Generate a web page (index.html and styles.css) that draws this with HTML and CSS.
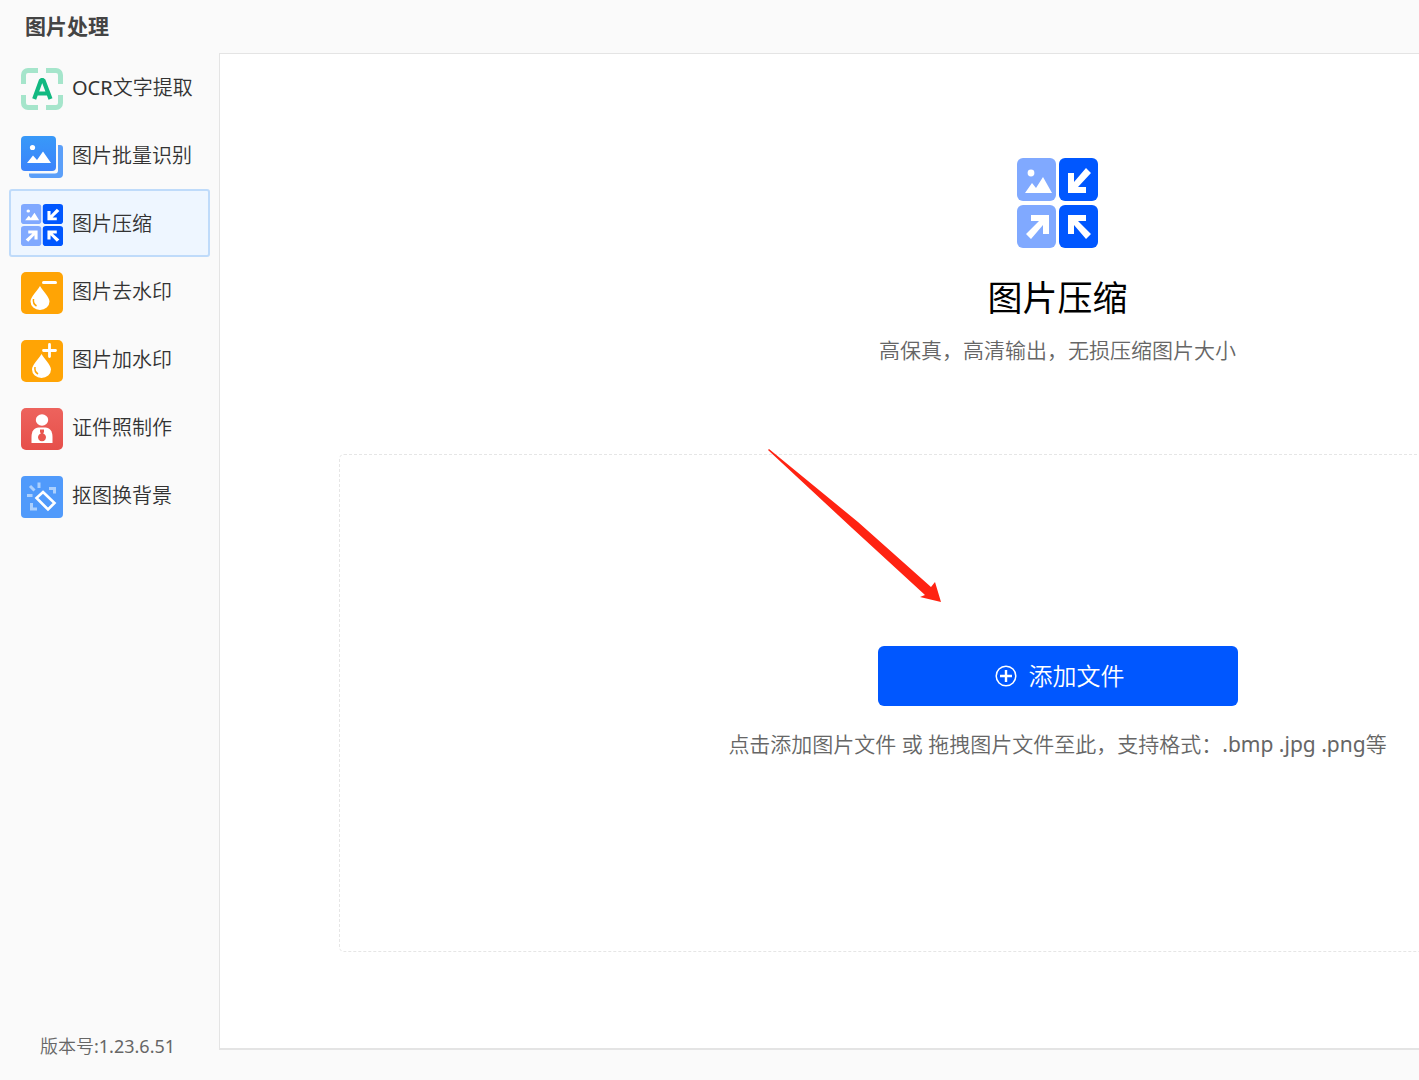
FILE: index.html
```html
<!DOCTYPE html>
<html lang="zh-CN">
<head>
  <meta charset="utf-8">
  <title>图片处理</title>
  <link rel="stylesheet" href="styles.css">
</head>
<body>
  <!-- 压缩图标，侧边栏和主面板共用 -->
  <svg class="symbols" aria-hidden="true">
    <symbol id="icon-compress" viewBox="0 0 81 90" preserveAspectRatio="none">
      <rect width="39" height="43" rx="6" fill="#80a9ff"/>
      <rect x="42" width="39" height="43" rx="6" fill="#0057ff"/>
      <rect y="47" width="39" height="43" rx="6" fill="#80a9ff"/>
      <rect x="42" y="47" width="39" height="43" rx="6" fill="#0057ff"/>
      <g fill="#fff">
        <circle cx="14" cy="15" r="3.4"/>
        <path d="M8 35l7-10 4 5 7-11 9 16z"/>
        <path d="M51 15h6v9L69 10l5 5-13 14h8v6H51z"/>
        <path d="M32 76h-6v-9L14 81l-5-5 13-13h-8v-6h18z"/>
        <path d="M51 76h6v-9l12 14 5-5-13-13h8v-6H51z"/>
      </g>
    </symbol>
  </svg>

  <div class="app">
    <header class="header">
      <h1 class="app-title">图片处理</h1>
    </header>

    <aside class="sidebar">
      <nav class="menu">
        <button class="menu-item">
          <svg class="menu-icon" viewBox="0 0 42 42">
            <path d="M2.500 16V7a4.500 4.500 0 0 1 4.500-4.500h10M25 2.500h10A4.500 4.500 0 0 1 39.500 7v9M39.500 27v8a4.500 4.500 0 0 1-4.500 4.500H25M17 39.500H7A4.500 4.500 0 0 1 2.500 35v-8" fill="none" stroke="#a5e5cb" stroke-width="5"/>
            <path d="M13.200 31l6.800-18.800h2.400L29.500 31M16 25.500h11" fill="none" stroke="#12b981" stroke-width="4.200" stroke-linejoin="bevel"/>
          </svg>
          <span class="menu-text"><span class="latin">OCR</span>文字提取</span>
        </button>
        <button class="menu-item">
          <svg class="menu-icon" viewBox="0 0 42 42">
            <defs>
              <linearGradient id="blue" x2="0" y2="1">
                <stop stop-color="#3899f8"/>
                <stop offset="1" stop-color="#3b83fb"/>
              </linearGradient>
            </defs>
            <path d="M37 9h2a3 3 0 0 1 3 3v26a4 4 0 0 1-4 4H11a3 3 0 0 1-3-3v-1.500h26a3 3 0 0 0 3-3z" fill="#5b9ff9"/>
            <rect width="35" height="35" rx="4" fill="url(#blue)"/>
            <circle cx="11.500" cy="11.500" r="2.600" fill="#fff"/>
            <path d="M6 27l6-7.500 4 4.500 6-8.500L30 27z" fill="#fff"/>
          </svg>
          <span class="menu-text">图片批量识别</span>
        </button>
        <button class="menu-item active">
          <svg class="menu-icon"><use href="#icon-compress"/></svg>
          <span class="menu-text">图片压缩</span>
        </button>
        <button class="menu-item">
          <svg class="menu-icon" viewBox="0 0 42 42">
            <rect width="42" height="42" rx="5" fill="#ffa405"/>
            <path d="M19 14c3 5 9.500 11 9.500 15.500a9.500 8.500 0 0 1-19 0C9.500 25 16 19 19 14z" fill="#fff"/>
            <path d="M12.500 27c-.5 3 .5 5.500 3 7" fill="none" stroke="#ffa405" stroke-width="1.500"/>
            <path d="M22.500 10.500h12" stroke="#fff" stroke-width="3" stroke-linecap="round"/>
          </svg>
          <span class="menu-text">图片去水印</span>
        </button>
        <button class="menu-item">
          <svg class="menu-icon" viewBox="0 0 42 42">
            <rect width="42" height="42" rx="5" fill="#ffa405"/>
            <path d="M20.500 14c3 5 9.500 11 9.500 15.500a9.500 8.500 0 0 1-19 0C11 25 17.500 19 20.500 14z" fill="#fff"/>
            <path d="M14 27c-.5 3 .5 5.500 3 7" fill="none" stroke="#ffa405" stroke-width="1.500"/>
            <path d="M22.500 10.500h12M28.500 4.500v12" stroke="#fff" stroke-width="2.800" stroke-linecap="round"/>
          </svg>
          <span class="menu-text">图片加水印</span>
        </button>
        <button class="menu-item">
          <svg class="menu-icon" viewBox="0 0 42 42">
            <defs>
              <linearGradient id="red" x2="0" y2="1">
                <stop stop-color="#ed635d"/>
                <stop offset="1" stop-color="#e64f4a"/>
              </linearGradient>
            </defs>
            <rect width="42" height="42" rx="5" fill="url(#red)"/>
            <ellipse cx="21" cy="12" rx="6.200" ry="5.800" fill="#fff"/>
            <path d="M10.500 35v-6c0-6 3-9.500 7-9.500h7c4 0 7 3.500 7 9.500v6z" fill="#fff"/>
            <path d="M19 21.500h4v2.500l-.8 1.500a4 4 0 1 1-2.400 0L19 24z" fill="#e9564f"/>
          </svg>
          <span class="menu-text">证件照制作</span>
        </button>
        <button class="menu-item">
          <svg class="menu-icon" viewBox="0 0 42 42">
            <rect width="42" height="42" rx="4" fill="#509afb"/>
            <path d="M6 19.500h5.500M9 10l4.500 4.500M18 6.500v5.500M28 12.500h5.500v5M10.500 27v6H16" fill="none" stroke="#acd0fd" stroke-width="3"/>
            <path d="M22 16L33.500 27 27 33.500 15.500 22z" fill="none" stroke="#fff" stroke-width="2.600"/>
          </svg>
          <span class="menu-text">抠图换背景</span>
        </button>
      </nav>
      <p class="version">版本号<span class="latin">:1.23.6.51</span></p>
    </aside>

    <main class="panel">
      <svg class="panel-icon"><use href="#icon-compress"/></svg>
      <h2 class="panel-title">图片压缩</h2>
      <p class="panel-desc">高保真，高清输出，无损压缩图片大小</p>

      <section class="drop-zone">
        <button class="add-button">
          <svg class="add-icon" viewBox="0 0 22 22">
            <circle cx="11" cy="11" r="9.800" fill="none" stroke="#fff" stroke-width="1.500"/>
            <path d="M5 11h12M11 5v12" stroke="#fff" stroke-width="2.400"/>
          </svg>
          <span class="add-text">添加文件</span>
        </button>
        <p class="drop-hint">点击添加图片文件 或 拖拽图片文件至此，支持格式：<span class="latin">.bmp .jpg .png</span>等</p>
        <svg class="pointer" viewBox="0 0 176 155">
          <path d="M1 0L90 73l73 65 4-5 6 20-21-5 5-2L84 79 0 1z" fill="#ff2312"/>
        </svg>
      </section>
    </main>
  </div>
</body>
</html>
```

FILE: styles.css
```css
* {
  box-sizing: border-box;
}

body {
  margin: 0;
  background-color: #fafafa;
  color: #333333;
  font-family: "Noto Sans", "Noto Sans CJK SC", sans-serif;
  font-weight: 350;
  overflow: hidden;
}

button {
  font: inherit;
  cursor: pointer;
}

h1, h2, p {
  margin: 0;
}

.symbols {
  display: none;
}

.latin {
  font-weight: 400;
}

/* 窗口变窄时内容不收缩，右侧被裁掉 */
.app {
  display: grid;
  grid-template-columns: 219px 1fr;
  grid-template-rows: 53px 1fr;
  min-width: 1896px;
  height: 100vh;
  padding-bottom: 30px;
}

.header {
  grid-column: 1 / 3;
  display: flex;
  align-items: center;
  padding: 0 25px 4px;
}

.app-title {
  font-size: 21px;
  font-weight: bold;
  color: #444444;
}

.sidebar {
  display: flex;
  flex-direction: column;
  justify-content: space-between;
  padding: 0 9px;
}

.menu {
  display: flex;
  flex-direction: column;
}

.menu-item {
  display: flex;
  align-items: center;
  gap: 9px;
  height: 68px;
  padding: 0 10px;
  border: 2px solid transparent;
  border-radius: 3px;
  background: none;
  color: #333333;
  font-size: 20px;
  white-space: nowrap;
}

.menu-item.active {
  border-color: #bfdbfa;
  background-color: #eef6ff;
}

.menu-icon {
  flex: none;
  width: 42px;
  height: 42px;
  margin-top: 4px;
}

.menu-text {
  padding-bottom: 2px;
}

.version {
  padding-left: 31px;
  color: #666666;
  font-size: 18px;
  line-height: 24px;
  margin-bottom: -8px;
}

.panel {
  display: flex;
  flex-direction: column;
  align-items: center;
  padding: 104px 119px 96px;
  border: 1px solid #e4e4e4;
  border-bottom-width: 2px;
  background-color: #ffffff;
}

.panel-icon {
  width: 81px;
  height: 90px;
}

.panel-title {
  margin-top: 24px;
  color: #000000;
  font-size: 35px;
  font-weight: 400;
  line-height: 52px;
}

.panel-desc {
  margin-top: 10px;
  color: #666666;
  font-size: 21px;
  line-height: 32px;
}

.drop-zone {
  position: relative;
  flex: 1;
  align-self: stretch;
  display: flex;
  flex-direction: column;
  align-items: center;
  justify-content: center;
  gap: 22px;
  margin-top: 88px;
  border: 1px dashed #e6e6e6;
  border-radius: 5px;
}

.add-button {
  display: flex;
  align-items: center;
  justify-content: center;
  gap: 12px;
  width: 360px;
  height: 60px;
  padding: 0 0 0 4px;
  border: none;
  border-radius: 6px;
  background-color: #0057ff;
  color: #ffffff;
  font-size: 24px;
}

.add-icon {
  width: 22px;
  height: 22px;
}

.add-text {
  padding-bottom: 4px;
}

.drop-hint {
  color: #666666;
  font-size: 21px;
  line-height: 32px;
}

/* 指向添加按钮的红色箭头 */
.pointer {
  position: absolute;
  top: -6px;
  left: 428px;
  width: 176px;
  height: 155px;
  pointer-events: none;
}
```
